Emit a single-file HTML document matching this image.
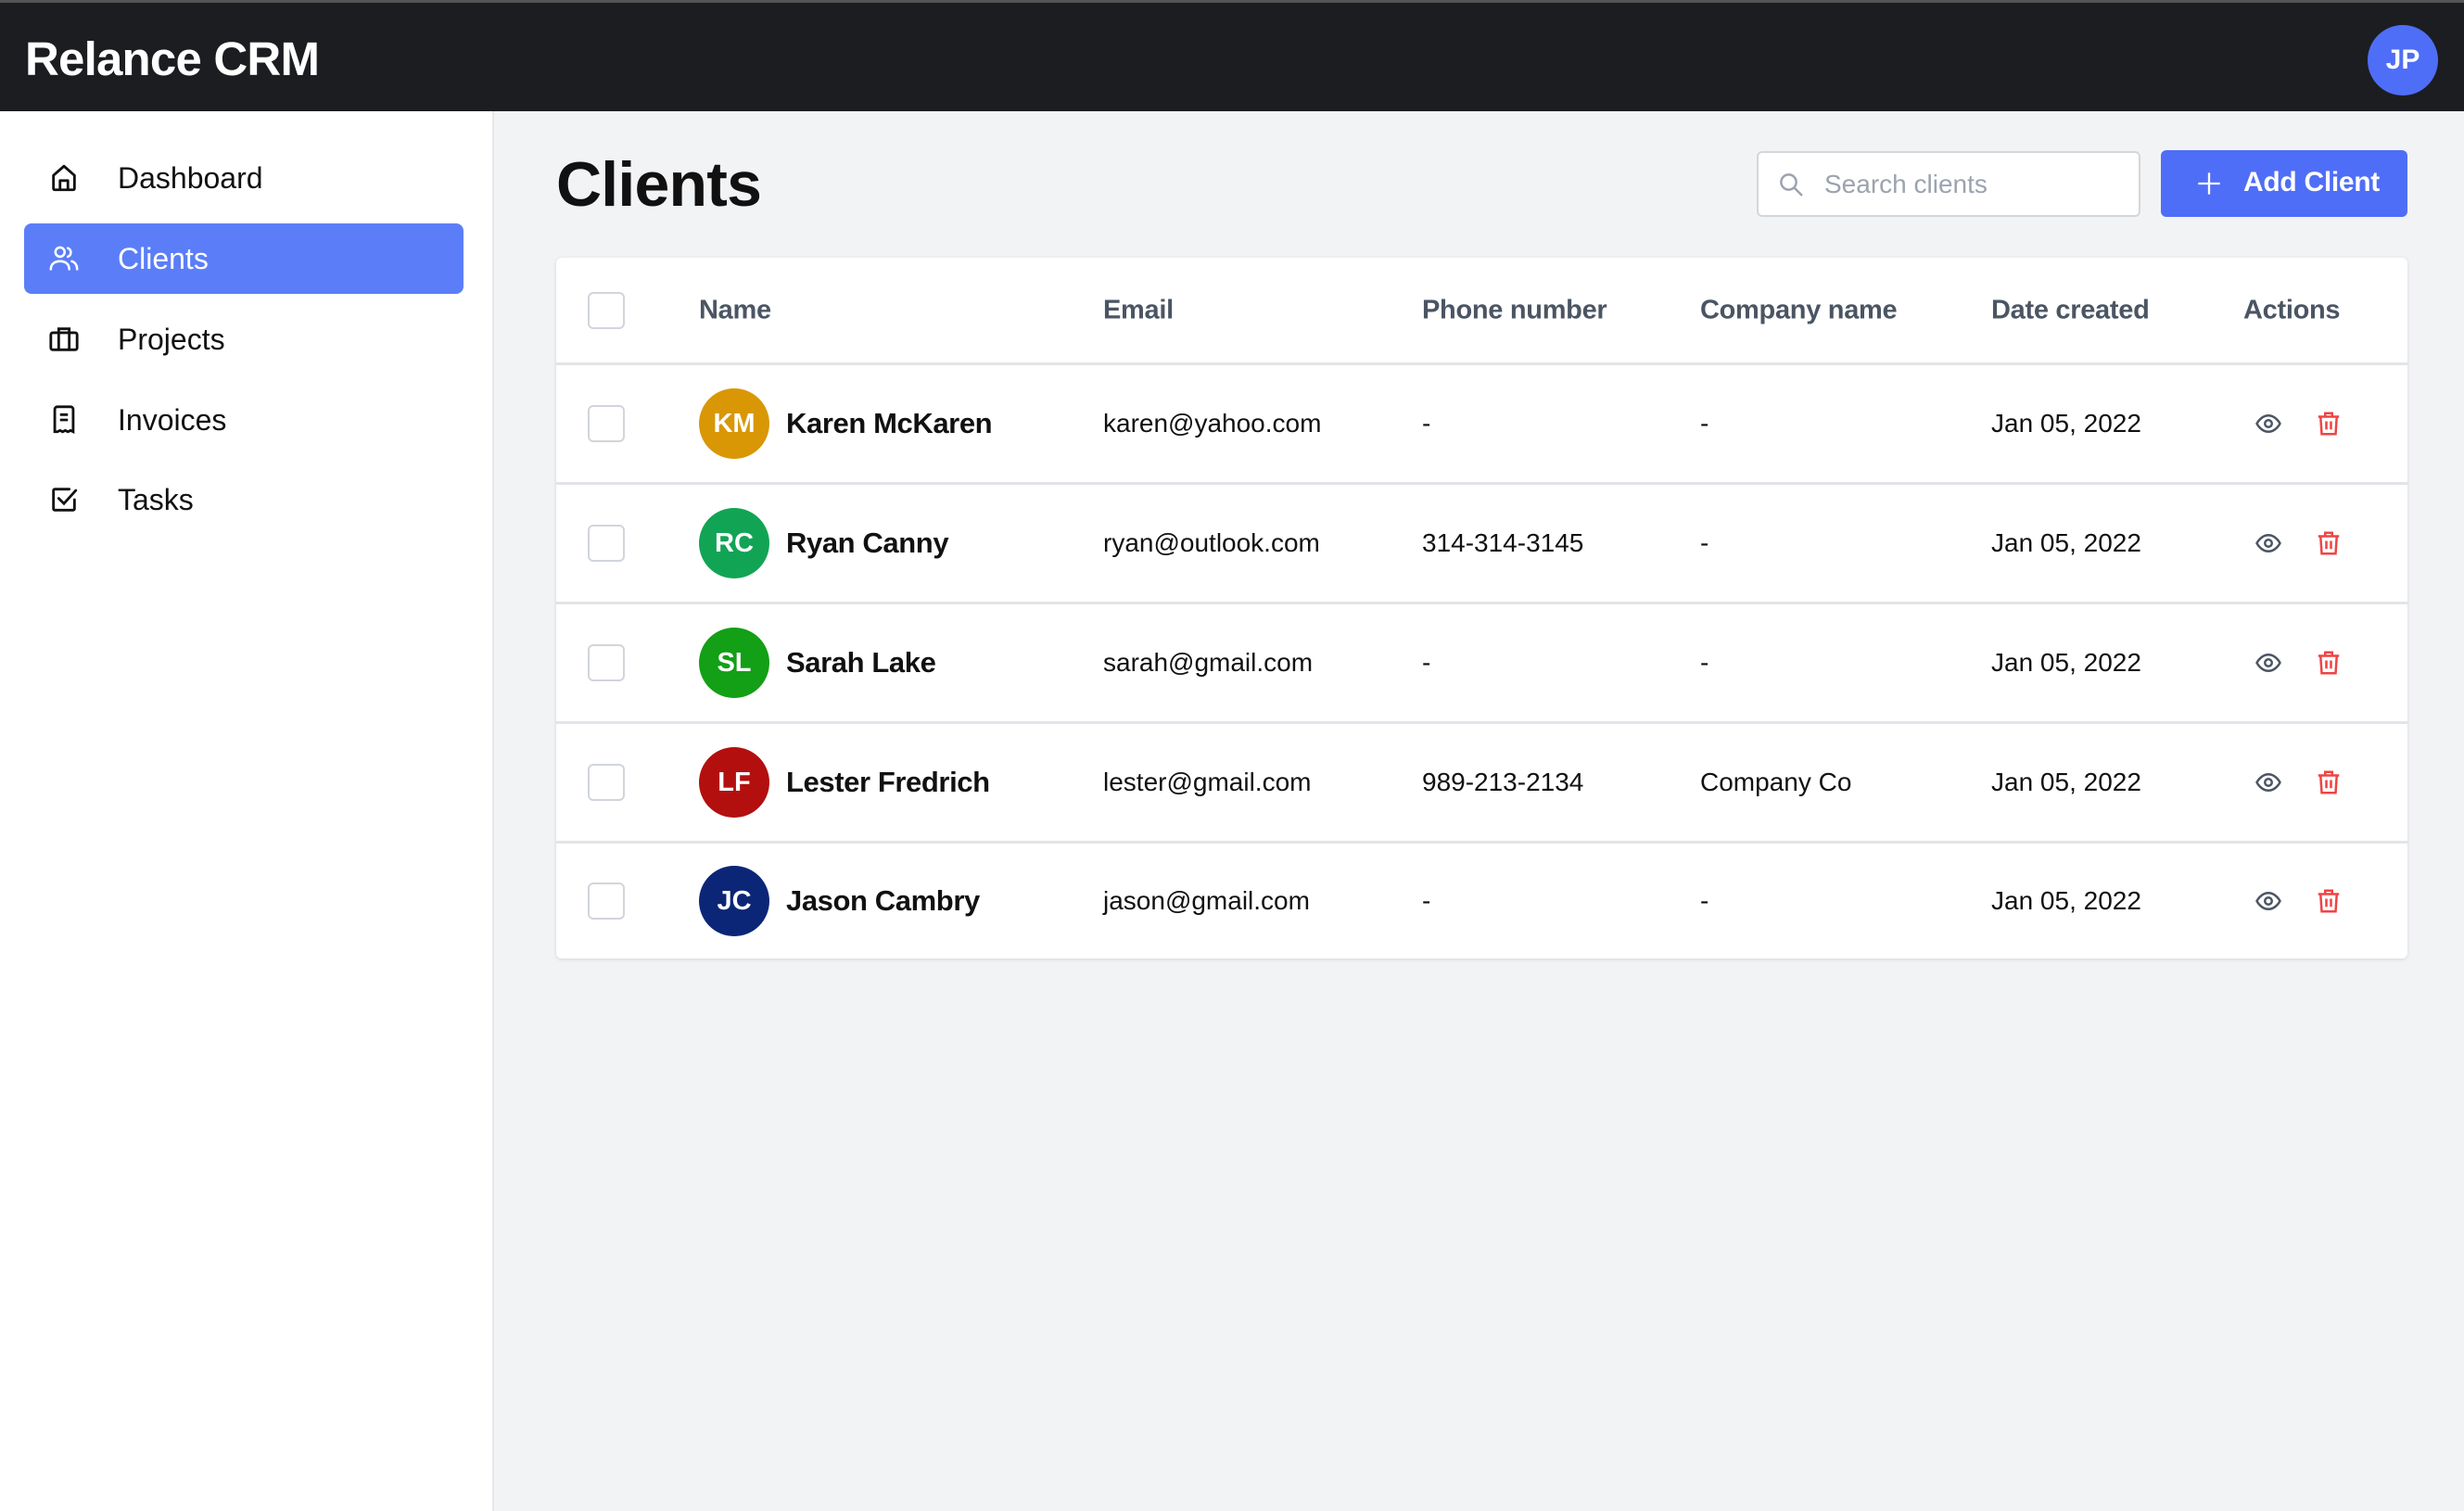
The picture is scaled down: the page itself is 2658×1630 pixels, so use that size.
<!DOCTYPE html>
<html><head><meta charset="utf-8"><style>
*{margin:0;padding:0;box-sizing:border-box}
body{width:2658px;height:1630px;overflow:hidden;background:#f2f3f5;font-family:"Liberation Sans",sans-serif;position:relative;color:#111}
.hdr{position:absolute;left:0;top:0;width:2658px;height:120px;background:#1c1d21;border-top:3px solid #555}
.hdr h1{position:absolute;left:27px;top:31px;font-size:51px;color:#fff;font-weight:bold;letter-spacing:-0.8px}
.jp{position:absolute;left:2554px;top:24px;width:76px;height:76px;border-radius:50%;background:#4f6ef7;color:#fff;font-weight:bold;font-size:30px;display:flex;align-items:center;justify-content:center}
.side{position:absolute;left:0;top:120px;width:533px;height:1510px;background:#fff;border-right:2px solid #e6e7ea}
.nav{position:absolute;left:26px;width:474px;height:76px;border-radius:8px;display:flex;align-items:center;font-size:32px}
.nav svg{position:absolute;left:26px;width:34px;height:34px}
.nav span{position:absolute;left:101px}
.nav.act{background:#5b7ef8;color:#fff}
h2{position:absolute;left:600px;top:160px;font-size:68px;font-weight:bold;letter-spacing:-0.8px}
.search{position:absolute;left:1895px;top:163px;width:414px;height:71px;background:#fff;border:2px solid #d4d6da;border-radius:6px;color:#9ca3af;font-size:28px}
.search span{position:absolute;left:71px;top:18px}
.btn{position:absolute;left:2331px;top:162px;width:266px;height:72px;background:#4f6ef7;border-radius:6px;color:#fff;font-size:30px;font-weight:bold}
.btn span{position:absolute;left:89px;top:18px;letter-spacing:-0.3px}
.card{position:absolute;left:600px;top:278px;width:1997px;height:756px;background:#fff;border-radius:6px;box-shadow:0 1px 4px rgba(0,0,0,.12)}
.row{position:absolute;left:0;width:1997px;height:129px;border-top:3px solid #e2e4e8}
.c{position:absolute;top:50%;transform:translateY(-50%);font-size:28px;white-space:nowrap}
.th{font-weight:bold;color:#4b5563;font-size:29px;letter-spacing:-0.3px}
.cb{position:absolute;left:34px;top:50%;margin-top:-20px;width:40px;height:40px;border:2px solid #d1d5db;border-radius:6px}
.av{position:absolute;left:154px;top:50%;margin-top:-38px;width:76px;height:76px;border-radius:50%;color:#fff;font-weight:bold;font-size:29px;display:flex;align-items:center;justify-content:center}
.nm{left:248px;font-weight:bold;font-size:31px;letter-spacing:-0.4px}
</style></head><body>
<div class="hdr"><h1>Relance CRM</h1><div class="jp">JP</div></div>
<div class="side">
<div class="nav" style="top:34px"><svg viewBox="0 0 24 24" fill="none" stroke="#111" stroke-width="2" stroke-linejoin="round"><path d="M4 10l8-7 8 7v10a1 1 0 01-1 1H5a1 1 0 01-1-1z"/><path d="M9 21v-7h6v7"/></svg><span>Dashboard</span></div>
<div class="nav act" style="top:121px"><svg viewBox="0 0 24 24" fill="none" stroke="#fff" stroke-width="1.8" stroke-linecap="round"><circle cx="9" cy="7" r="3.5"/><path d="M2 20c0-4 3-6 7-6s7 2 7 6"/><path d="M15 4a3.5 3.5 0 010 6.5M18 14c2.5.8 4 3 4 6"/></svg><span>Clients</span></div>
<div class="nav" style="top:208px"><svg viewBox="0 0 24 24" fill="none" stroke="#111" stroke-width="2"><rect x="2" y="7" width="20" height="13" rx="1.5"/><path d="M8 7V4h8v3M8 7v13M16 7v13"/></svg><span>Projects</span></div>
<div class="nav" style="top:295px"><svg viewBox="0 0 24 24" fill="none" stroke="#111" stroke-width="2"><path d="M5 21V4a2 2 0 012-2h10a2 2 0 012 2v17l-2-1-2 1-2-1-2 1-2-1-2 1z"/><path d="M9 8h6M9 12h6"/></svg><span>Invoices</span></div>
<div class="nav" style="top:381px"><svg viewBox="0 0 24 24" fill="none" stroke="#111" stroke-width="2" stroke-linecap="round"><path d="M20 12v7a1 1 0 01-1 1H5a1 1 0 01-1-1V5a1 1 0 011-1h11"/><path d="M8 11l4 4 9-10"/></svg><span>Tasks</span></div>
</div>
<h2>Clients</h2>
<div class="search"><svg style="position:absolute;left:20px;top:19px" width="30" height="30" viewBox="0 0 24 24" fill="none" stroke="#9ca3af" stroke-width="2" stroke-linecap="round"><circle cx="10" cy="10" r="6.5"/><path d="M15 15l6 6"/></svg><span>Search clients</span></div>
<div class="btn"><svg style="position:absolute;left:38px;top:22px" width="28" height="28" viewBox="0 0 24 24" stroke="#fff" stroke-width="2"><path d="M12 2v20M2 12h20"/></svg><span>Add Client</span></div>
<div class="card">
<div class="row" style="top:0;border-top:none;height:113px">
<div class="cb"></div>
<div class="c th" style="left:154px">Name</div><div class="c th" style="left:590px">Email</div><div class="c th" style="left:934px">Phone number</div><div class="c th" style="left:1234px">Company name</div><div class="c th" style="left:1548px">Date created</div><div class="c th" style="left:1820px">Actions</div>
</div>
<div class="row" style="top:113px"><div class="cb"></div><div class="av" style="background:#d99706">KM</div><div class="c nm">Karen McKaren</div><div class="c" style="left:590px">karen@yahoo.com</div><div class="c" style="left:934px">-</div><div class="c" style="left:1234px">-</div><div class="c" style="left:1548px">Jan 05, 2022</div>ACT</div>
<div class="row" style="top:242px"><div class="cb"></div><div class="av" style="background:#12a455">RC</div><div class="c nm">Ryan Canny</div><div class="c" style="left:590px">ryan@outlook.com</div><div class="c" style="left:934px">314-314-3145</div><div class="c" style="left:1234px">-</div><div class="c" style="left:1548px">Jan 05, 2022</div>ACT</div>
<div class="row" style="top:371px"><div class="cb"></div><div class="av" style="background:#139f16">SL</div><div class="c nm">Sarah Lake</div><div class="c" style="left:590px">sarah@gmail.com</div><div class="c" style="left:934px">-</div><div class="c" style="left:1234px">-</div><div class="c" style="left:1548px">Jan 05, 2022</div>ACT</div>
<div class="row" style="top:500px"><div class="cb"></div><div class="av" style="background:#b30f0f">LF</div><div class="c nm">Lester Fredrich</div><div class="c" style="left:590px">lester@gmail.com</div><div class="c" style="left:934px">989-213-2134</div><div class="c" style="left:1234px">Company Co</div><div class="c" style="left:1548px">Jan 05, 2022</div>ACT</div>
<div class="row" style="top:629px;height:127px"><div class="cb"></div><div class="av" style="background:#0c2677">JC</div><div class="c nm">Jason Cambry</div><div class="c" style="left:590px">jason@gmail.com</div><div class="c" style="left:934px">-</div><div class="c" style="left:1234px">-</div><div class="c" style="left:1548px">Jan 05, 2022</div>ACT</div>
</div>
<script>
document.querySelectorAll('.row').forEach(function(r,i){if(i==0)return;r.innerHTML=r.innerHTML.replace('ACT','<svg style="position:absolute;left:1832px;top:50%;margin-top:-15px" width="30" height="30" viewBox="0 0 24 24" fill="none" stroke="#4b5563" stroke-width="2"><path d="M2 12s3.5-7 10-7 10 7 10 7-3.5 7-10 7S2 12 2 12z"/><circle cx="12" cy="12" r="3"/></svg><svg style="position:absolute;left:1897px;top:50%;margin-top:-15px" width="30" height="30" viewBox="0 0 24 24" fill="none" stroke="#ef4444" stroke-width="2"><path d="M3 6h18M9 6V3h6v3M5 6l1 15h12l1-15M10 10v7M14 10v7"/></svg>');});
</script>
</body></html>
